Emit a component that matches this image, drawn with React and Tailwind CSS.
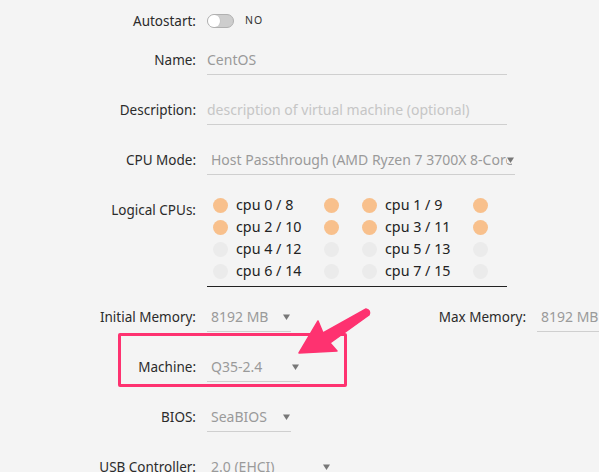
import React from 'react';

const cpus = [
    { name: 'cpu 0 / 8', on: true },
    { name: 'cpu 1 / 9', on: true },
    { name: 'cpu 2 / 10', on: true },
    { name: 'cpu 3 / 11', on: true },
    { name: 'cpu 4 / 12', on: false },
    { name: 'cpu 5 / 13', on: false },
    { name: 'cpu 6 / 14', on: false },
    { name: 'cpu 7 / 15', on: false },
];

function Label({ children, className = '' }) {
    return <div className={'w-[196px] shrink-0 text-right text-[#2b2b2b] ' + className}>{children}</div>;
}

function Caret() {
    return (
        <svg width="7" height="6" viewBox="0 0 7 6" className="shrink-0 -ml-[5px] relative bg-[#f4f4f4]">
            <path d="M0 0.5 H7 L3.5 6 Z" fill="#777" />
        </svg>
    );
}

function Select({ value, className = '' }) {
    return (
        <div className={'ml-[11px] h-[30px] shrink-0 border-b border-[#cfcfcf] flex items-center pl-[4px] pr-[1px] text-[14px] text-[#9a9a9a] ' + className}>
            <span className="flex-1 min-w-0 overflow-hidden whitespace-nowrap">{value}</span>
            <Caret />
        </div>
    );
}

function Dot({ on }) {
    return <span className={'w-[15px] h-[15px] rounded-full shrink-0 ' + (on ? 'bg-[#f8c08c]' : 'bg-[#ebebeb]')} />;
}

export default function App() {
    return (
        <div className="relative w-[599px] h-[472px] overflow-hidden bg-[#f4f4f4] font-['Noto_Sans',sans-serif] text-[13.5px]">
            <div className="flex flex-col">
                <div className="flex items-center h-[42px]">
                    <Label>Autostart:</Label>
                    <div className="ml-[11px] flex items-center">
                        <span className="w-[27px] h-[14px] rounded-full bg-[#cdcdcd] border border-[#b0b0b0] flex items-center">
                            <span className="w-[13px] h-[12px] rounded-full bg-white border-r border-[#c4c4c4]" />
                        </span>
                        <span className="ml-[11px] text-[10.5px] tracking-[1px] text-[#333]">NO</span>
                    </div>
                </div>

                <div className="flex items-center mt-[3px]">
                    <Label>Name:</Label>
                    <div className="ml-[11px] w-[300px] h-[30px] border-b border-[#cfcfcf] flex items-center text-[14px] text-[#9a9a9a]">CentOS</div>
                </div>

                <div className="flex items-center mt-[20px]">
                    <Label>Description:</Label>
                    <div className="ml-[11px] w-[300px] h-[30px] border-b border-[#cfcfcf] flex items-center text-[14px] text-[#c6c6c6]">
                        description of virtual machine (optional)
                    </div>
                </div>

                <div className="flex items-center mt-[20px]">
                    <Label>CPU Mode:</Label>
                    <Select className="w-[308px]" value="Host Passthrough (AMD Ryzen 7 3700X 8-Core Processor)" />
                </div>

                <div className="flex items-start mt-[19px]">
                    <Label className="pt-[6px]">Logical CPUs:</Label>
                    <div className="ml-[11px] w-[300px] border-b border-[#222] pl-[6px] pb-[4px] grid grid-cols-[126px_126px] gap-x-[23px]">
                        {cpus.map((c) => (
                            <div key={c.name} className="flex items-center h-[22px]">
                                <Dot on={c.on} />
                                <span className="ml-[8px] w-[89px] text-[14.3px] text-[#222]">{c.name}</span>
                                <Dot on={c.on} />
                            </div>
                        ))}
                    </div>
                </div>

                <div className="flex items-center mt-[15px]">
                    <Label>Initial Memory:</Label>
                    <Select className="w-[84px]" value="8192 MB" />
                    <div className="w-[235px] shrink-0 text-right text-[#2b2b2b]">Max Memory:</div>
                    <Select className="w-[84px]" value="8192 MB" />
                </div>

                <div className="flex items-center mt-[20px]">
                    <Label>Machine:</Label>
                    <Select className="w-[93px]" value="Q35-2.4" />
                </div>

                <div className="flex items-center mt-[20px]">
                    <Label>BIOS:</Label>
                    <Select className="w-[84px]" value="SeaBIOS" />
                </div>

                <div className="flex items-center mt-[20px]">
                    <Label>USB Controller:</Label>
                    <Select className="w-[124px]" value="2.0 (EHCI)" />
                </div>
            </div>

            {/* annotation overlay */}
            <div className="absolute left-[118px] top-[333px] w-[229px] h-[54px] border-[3px] border-[#fe3270] rounded-[2px]" />
            <svg className="absolute left-0 top-0" width="599" height="472">
                <path
                    d="M299 353 L318 321 L323 333 L366 309 Q371 310 369 315 L330 343 L337 351 Z"
                    fill="#fe3270"
                    stroke="#fe3270"
                    strokeWidth="1.5"
                    strokeLinejoin="round"
                />
            </svg>
        </div>
    );
}
